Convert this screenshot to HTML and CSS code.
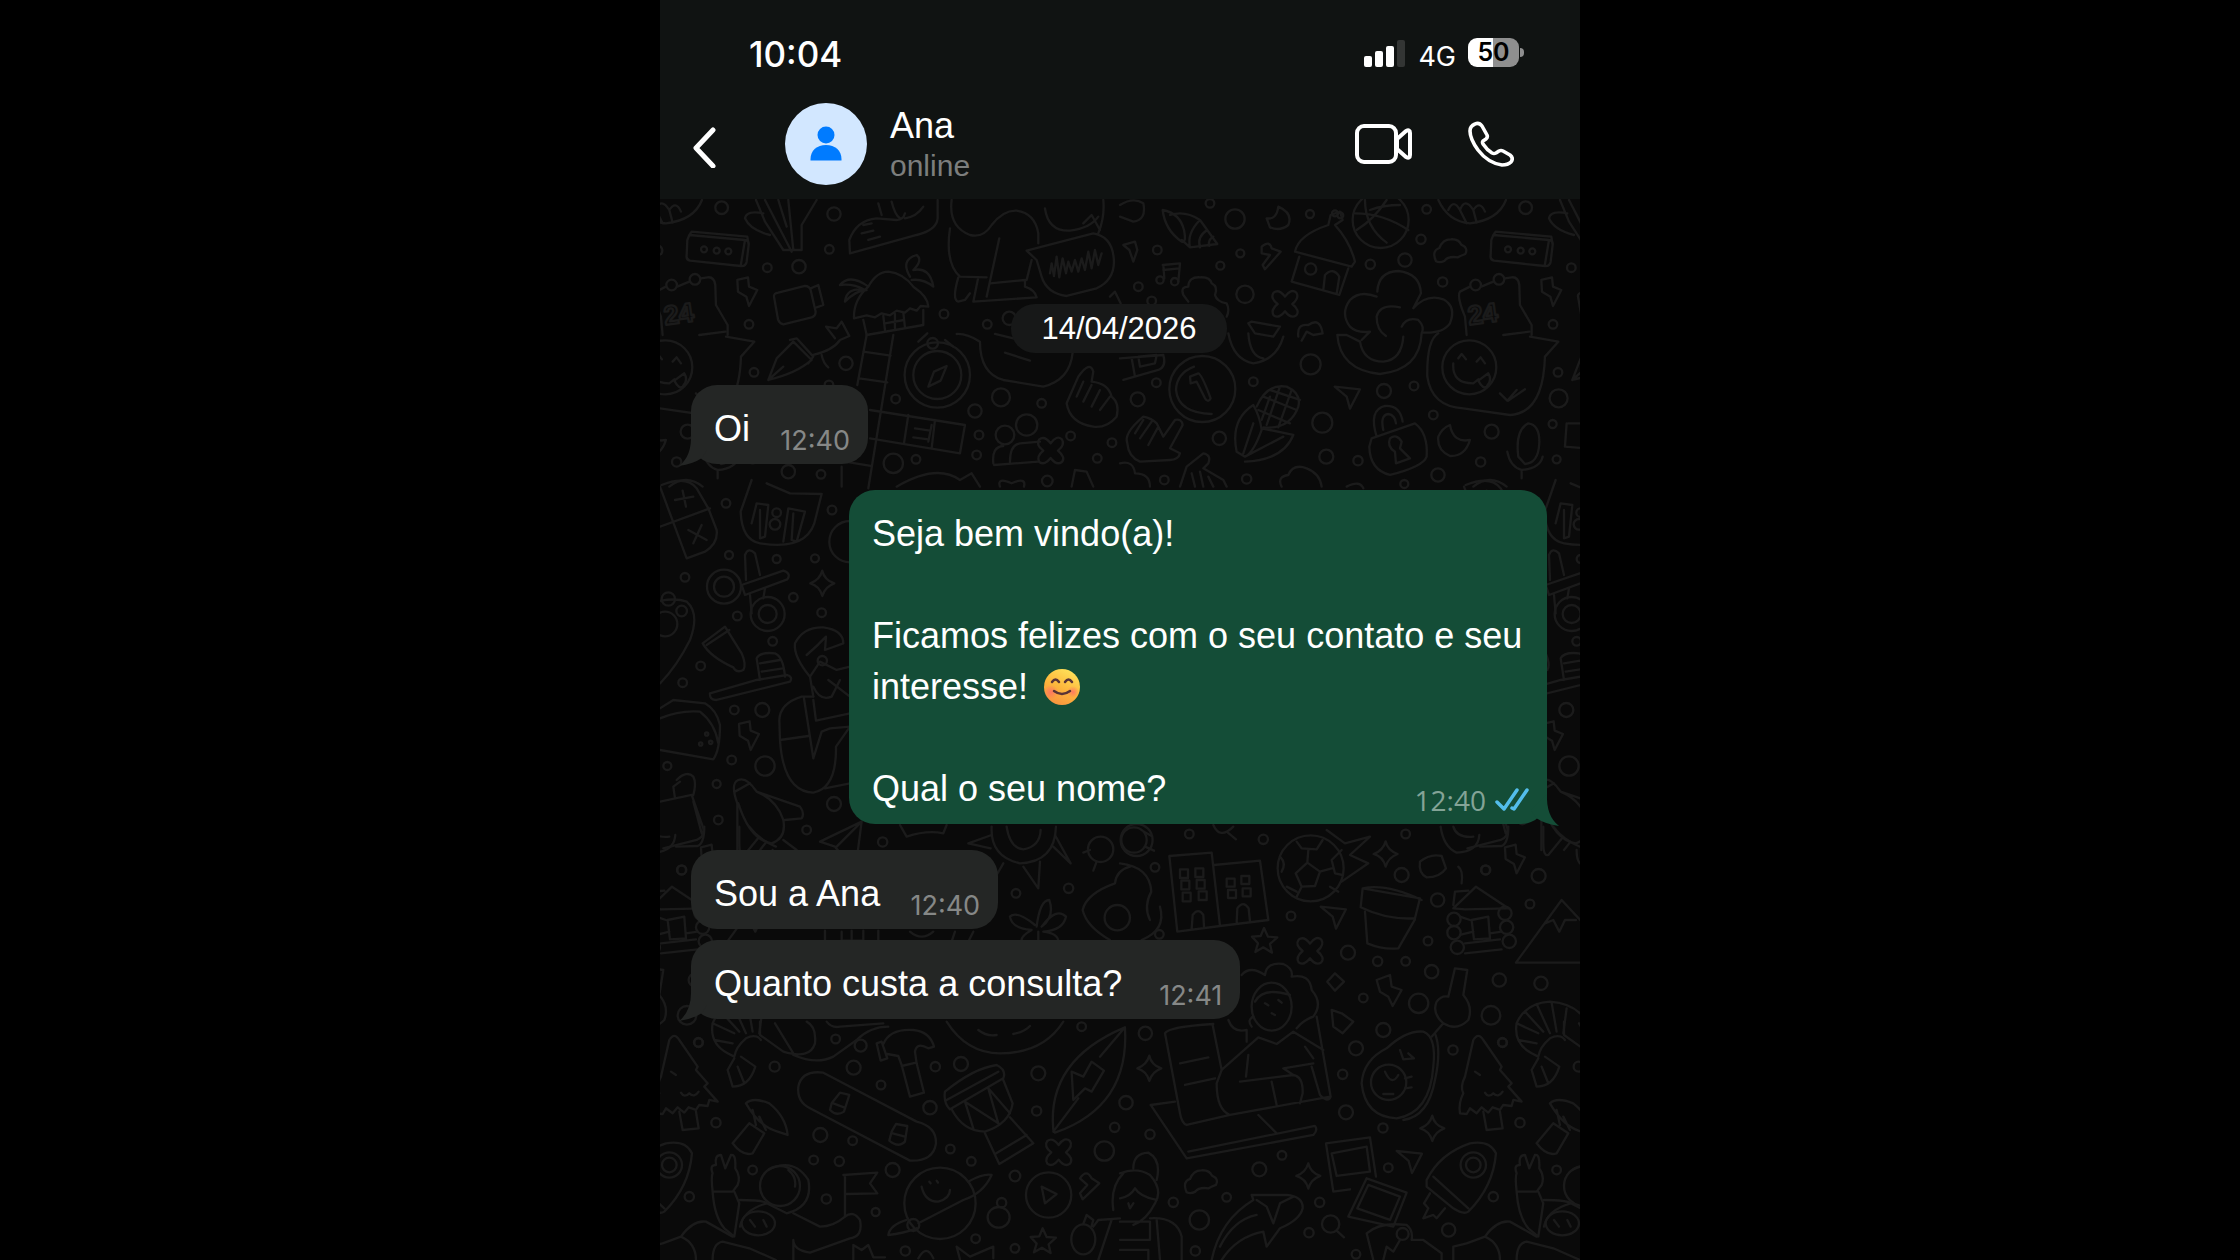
FILE: index.html
```html
<!DOCTYPE html>
<html lang="pt-BR">
<head>
    <meta charset="UTF-8">
    <meta name="viewport" content="width=device-width, initial-scale=1.0">
    <title>Ana</title>
    <link rel="stylesheet" href="styles.css">
</head>
<body>
    <div class="phone">
        <header class="header">
            <div class="status-bar">
                <span class="clock">10:04</span>
                <div class="status-icons">
                    <svg class="signal" width="42" height="27" viewBox="0 0 42 27" aria-hidden="true">
                        <rect x="0" y="16" width="8" height="11" rx="2" fill="#fff"/>
                        <rect x="11" y="11" width="8" height="16" rx="2" fill="#fff"/>
                        <rect x="22" y="6" width="8" height="21" rx="2" fill="#fff"/>
                        <rect x="33" y="0" width="8" height="27" rx="2" fill="#333534"/>
                    </svg>
                    <span class="network">4G</span>
                    <span class="battery">50</span>
                </div>
            </div>
            <div class="contact-bar">
                <button class="icon-button back" aria-label="Voltar">
                    <svg width="24" height="48" viewBox="0 0 24 48">
                        <path d="M20 10 3 28l17 18" fill="none" stroke="#fff" stroke-width="5" stroke-linecap="round" stroke-linejoin="round"/>
                    </svg>
                </button>
                <div class="avatar">
                    <svg width="32" height="36" viewBox="0 0 32 36" aria-hidden="true">
                        <circle cx="16" cy="9" r="8.5" fill="#007bff"/>
                        <path d="M.5 34.500V33C.5 24.500 7 19 16 19s15.500 5.500 15.500 14v1.500z" fill="#007bff"/>
                    </svg>
                </div>
                <div class="contact">
                    <h1 class="contact-name">Ana</h1>
                    <p class="contact-status">online</p>
                </div>
                <div class="actions">
                    <button class="icon-button" aria-label="Chamada de vídeo">
                        <svg width="58" height="40" viewBox="0 0 58 40" fill="none" stroke="#fff" stroke-width="4" stroke-linejoin="round">
                            <rect x="2" y="2" width="39" height="36" rx="7"/>
                            <path d="M42 15 51 7q4-2 4 2v22q0 4-4 2L42 25z"/>
                        </svg>
                    </button>
                    <button class="icon-button" aria-label="Ligar">
                        <svg width="46" height="46" viewBox="0 0 46 46" fill="none" stroke="#fff" stroke-width="3.600" stroke-linejoin="round">
                            <path d="M7 3q4-2 7 2l5 9q1 2-1 4l-3 2q-1 1 0 3 4 6 9 9 2 1 4 0l3-2q2-1 4 0l7 4q4 3 1 7-3 3-9 3Q20 42 10 29 2 18 2 10q0-5 5-7z"/>
                        </svg>
                    </button>
                </div>
            </div>
        </header>

        <main class="chat">
            <!-- wallpaper, repeats every 804px -->
            <svg class="wallpaper" width="920" height="1061" aria-hidden="true">
                <defs>
                    <path id="spark" d="M0-38Q6-10 36 0 8 10 0 38-8 8-36 0-8-10 0-38z"/>
                    <path id="bolt" d="M-30-38 2-46 5-18 30-8 5 40-3 12-28-3z"/>
                    <path id="plane" d="M-38-32 38-24 8 34-2-2z"/>
                    <path id="clover" d="M0-22Q18-48 34-34 44-18 22 0 46 20 34 34 18 46 0 22-18 46-34 34-44 18-22 0-46-18-34-34-18-46 0-22z"/>
                    <path id="cloud" d="M-42 32Q-56 0-32-8-22-34 2-34 26-36 34-18 56-8 46 10 30 16 24 20-6 16-16 30-30 38-42 32z"/>
                    <path id="star" d="M-2-38 10-12 38-10 16 10 22 36-4 20-28 34-20 8-38-12-12-14z"/>
                </defs>
                <g id="doodles">
                    <!-- top left -->
                    <g transform="translate(-10 -9) scale(.3333)">
                        <path d="M118 135 285 150Q298 152 296 165L290 215Q287 230 272 228L120 212Q108 210 110 195L112 150zM118 135 125 125 292 140 296 165M285 150 272 228"/>
                        <circle cx="162" cy="178" r="9"/><circle cx="200" cy="182" r="9"/><circle cx="235" cy="184" r="9"/>
                        <path d="M318 30 345 95 400 180 455 180V105L500 30M345 30 425 185M385 30 410 110M415 30 430 180M340 70Q290 60 285 85 300 120 360 135"/>
                        <path d="M600 190 598 150Q620 90 680 85L740 90Q760 90 765 70M600 190 800 135Q860 120 863 85V30M685 40 695 75M725 35Q735 75 750 85M820 50Q800 80 765 85M640 105 665 100M635 130 670 122M655 150 690 140"/>
                        <path d="M905 30Q895 110 960 135 1000 145 1025 105 1060 60 1100 62 1155 70 1165 130V160M900 115Q885 220 930 260L1010 262M1048 145 1010 320M925 262Q905 330 925 335L945 330 960 310M985 262 970 335 1160 322Q1155 300 1125 290V270L1020 280M1130 270 1145 210"/>
                        <path d="M1130 182 1330 130Q1390 140 1392 215 1392 270 1340 295L1250 318Q1190 310 1175 260L1160 210zM1200 250 1205 220 1212 258 1220 200 1228 262 1238 205 1248 250 1255 215 1265 245 1275 210 1285 245 1295 205 1305 240 1315 185 1325 235 1335 180 1345 225 1355 190"/>
                        <path d="M1185 55Q1195 125 1260 122 1320 115 1345 80M1360 30Q1365 80 1345 130M1300 100 1325 75 1350 120"/>
                        <use href="#bolt" x="292" y="308"/>
                        <path d="M372 320Q370 310 385 308L465 288Q478 288 482 300L497 365Q497 378 485 382L400 403Q388 400 384 388zM482 295 505 285 520 345 500 352"/>
                        <path d="M612 385Q610 330 655 290 680 245 715 245 760 250 790 290 835 320 835 350L812 348 800 362 780 355 765 368 740 362 720 376 695 370 675 382 650 376zM640 390 650 435 820 405V360M700 378 705 420M735 372V415M760 368 765 412M705 400 762 390M655 290Q600 250 570 285 610 280 645 300 590 290 585 335 620 300 650 300M780 260Q750 210 800 195 820 210 790 240 840 230 850 290 820 265 785 270"/>
                        <path d="M650 435 622 585M730 435 655 895M640 485 722 497M628 565 712 577M585 815 662 828M575 830V890M660 660 945 705 930 790 660 745M775 675 762 760M855 690 845 775M795 715 840 722M790 742 835 748M845 705 835 755"/>
                        <circle cx="862" cy="555" r="98"/><circle cx="862" cy="555" r="72"/><circle cx="848" cy="460" r="16"/>
                        <path d="M835 590 852 545 890 528 872 572zM805 455 832 430M885 450 910 470"/>
                        <path d="M355 570 380 505 430 455 485 510Q440 550 355 570M420 450 440 445 490 500 475 520M355 570 400 530M490 495Q550 480 570 450L598 438 575 395 560 415 528 410 555 445M515 495Q520 520 535 532"/>
                        <path d="M920 432Q950 430 990 455 990 550 1060 570L1180 590Q1260 570 1268 488M1065 488 1140 512M1035 432 1090 445"/>
                        <path d="M1250 640 1285 560Q1320 510 1330 545L1325 575Q1375 580 1385 620 1410 640 1400 680 1370 715 1330 710 1260 700 1250 640M1300 575 1280 620M1325 585 1300 635M1350 600 1325 650M1380 620 1350 660"/>
                        <path d="M1080 815Q1080 765 1110 760L1170 755M1030 820Q1025 770 1060 768M1032 825 1165 815"/>
                        <use href="#clover" x="1202" y="782"/>
                        <circle cx="1130" cy="705" r="32"/><circle cx="1065" cy="735" r="28"/>
                        <circle cx="552" cy="72" r="20"/><circle cx="538" cy="178" r="13"/><circle cx="352" cy="233" r="13"/><circle cx="447" cy="230" r="20"/><circle cx="297" cy="403" r="13"/><circle cx="588" cy="520" r="20"/><circle cx="312" cy="547" r="13"/><circle cx="882" cy="372" r="13"/><circle cx="1012" cy="403" r="13"/><circle cx="1078" cy="385" r="20"/><circle cx="737" cy="627" r="13"/><circle cx="975" cy="663" r="20"/><circle cx="1053" cy="622" r="27"/><circle cx="1175" cy="640" r="13"/><circle cx="987" cy="735" r="13"/><circle cx="980" cy="795" r="13"/><circle cx="1262" cy="738" r="13"/><circle cx="1386" cy="758" r="13"/><circle cx="1342" cy="805" r="13"/><circle cx="730" cy="820" r="29"/><circle cx="798" cy="808" r="13"/><circle cx="415" cy="845" r="20"/><circle cx="513" cy="853" r="13"/><circle cx="1192" cy="873" r="16"/><circle cx="537" cy="585" r="13"/>
                        <path d="M740 890Q860 820 930 870L965 850 990 890M1050 890Q1040 860 1085 880 1130 860 1122 890M1265 890 1275 840 1310 845 1330 890M1380 320 1395 305 1412 340"/>
                    </g>

                    <!-- top right -->
                    <g transform="translate(460 -9) scale(.3333)">
                        <path d="M0 45Q40 20 70 40 80 90 40 95L0 80"/>
                        <path d="M128 60Q180 70 192 120 200 160 185 155 135 120 128 60zM150 75Q195 60 240 90L292 162 210 172 185 150M240 90Q200 130 210 172M262 120Q230 140 240 172M280 140Q262 150 268 168"/>
                        <path d="M440 85Q470 90 475 50 520 70 505 105 480 125 450 112zM10 165 45 155 52 180 40 215 28 180zM425 170Q450 150 455 175L482 185 435 238 428 225 450 195 425 190z"/>
                        <path d="M525 185Q535 135 625 105L632 75 660 65 668 90 645 105Q690 155 705 215L695 230zM538 200 515 275 658 315 685 235M610 300 615 255Q640 230 658 260L650 312"/>
                        <circle cx="572" cy="237" r="17"/><circle cx="645" cy="70" r="9"/><circle cx="661" cy="76" r="9"/>
                        <circle cx="782" cy="90" r="84"/>
                        <path d="M705 70Q790 70 865 120M735 30Q735 110 800 158M710 120Q760 90 800 30M840 45Q790 45 750 60"/>
                        <path d="M955 30Q985 95 1050 100 1135 90 1158 30M985 60Q1000 25 1020 60 1035 20 1060 60 1080 30 1095 65M1020 60 1040 100M1060 60 1070 98"/>
                        <use href="#cloud" x="990" y="182"/>
                        <path d="M128 225 180 220 175 275M130 225 133 265M130 240 178 235"/><circle cx="120" cy="270" r="11"/><circle cx="164" cy="275" r="11"/>
                        <path d="M190 315Q180 290 205 290 205 260 240 262 270 260 275 280 295 290 285 315 290 335 320 340 330 360 320 380M190 315 205 335"/>
                        <use href="#clover" x="495" y="342"/>
                        <path d="M325 430Q340 510 400 520 470 510 490 440M395 395 480 410 460 440 405 430 385 400zM385 430Q390 500 430 505M535 440Q530 400 565 405 600 380 608 430L580 435 560 425 545 452"/>
                        <path d="M772 305Q775 245 835 243 900 250 903 310L880 355Q920 310 970 328 1010 350 990 400 970 430 910 428M770 320Q720 300 690 330 660 370 690 410 710 430 750 425L725 450M840 352Q780 340 770 380 770 420 798 438M845 410Q860 380 895 390 915 410 905 430 900 540 780 552 660 540 652 435L680 435 720 455Q730 515 790 515 845 510 850 440"/>
                        <path d="M1040 435 1035 380Q1010 320 1020 305L1050 290M1084 290 1120 275M1155 265 1175 262Q1195 260 1198 285L1200 345 1235 405V435M1150 435 1228 425"/>
                        <circle cx="1067" cy="285" r="16"/><circle cx="1137" cy="268" r="16"/>
                        <text class="doodle-number" x="1048" y="405" transform="rotate(-8 1048 405)">24</text>
                        <circle cx="1048" cy="532" r="81"/>
                        <path d="M955 430Q920 450 922 560 935 650 1030 655L1170 675Q1270 670 1275 500L1315 455 1230 440M1000 520Q995 580 1060 580L1075 568M1015 505 1025 492 1038 508M1070 515 1082 502 1095 520M1075 572 1105 550Q1118 570 1100 590 1090 600 1075 572M1140 610 1162 632 1190 600M1165 632 1215 598"/>
                        <path d="M0 505 130 495Q140 530 115 540L10 570M35 505 45 560M55 500 110 495 105 520 60 530z"/>
                        <circle cx="247" cy="597" r="99"/>
                        <path d="M222 530Q170 550 168 600 175 670 275 672M210 560 235 550Q245 552 272 625 265 640 255 625L230 575 212 580z"/>
                        <path d="M350 785Q330 690 400 645 420 680 425 720 400 790 375 800zM370 790 400 700M425 715 520 735Q490 810 375 815M375 800 490 740"/>
                        <path d="M410 650Q440 580 500 590 545 610 535 650 510 720 430 712M430 620 530 660M415 660 510 700M450 600 540 630M480 590 440 705M515 600 475 712M450 620 425 690"/>
                        <use href="#plane" x="682" y="622"/>
                        <path d="M770 740Q745 660 795 648 840 645 848 695M790 720Q780 675 805 672 825 675 828 700M755 745 885 700Q925 730 920 800 910 830 810 855 750 840 748 770zM825 785Q800 770 810 745 830 730 845 755L840 775 870 805 828 820z"/>
                        <path d="M990 705Q1000 760 1050 750 1035 800 990 798 950 780 955 740 965 715 990 705zM1195 800Q1185 720 1225 700 1260 705 1258 760 1255 820 1215 822M1195 800 1215 822M1162 785Q1170 830 1205 840 1260 835 1268 800M1205 840V865"/>
                        <path d="M22 760Q10 730 70 680 95 685 110 700L130 740 165 690Q185 685 188 705L150 775 180 790Q175 810 150 810L60 815Q25 800 22 760M70 690 45 730M95 695 60 745M115 710 85 765"/>
                        <path d="M180 890 200 830 250 790Q275 795 265 820L250 835 310 870 320 890M215 850 225 890M240 845 250 890M265 860 280 890M0 820Q40 810 45 850 90 850 90 890M485 890Q470 860 505 855 520 820 560 835 600 850 605 890M680 890Q720 870 730 895M1060 890Q1110 850 1160 890M1345 700H1400M1340 700 1335 770 1400 775"/>
                        <circle cx="345" cy="87" r="29"/><circle cx="270" cy="40" r="13"/><circle cx="570" cy="72" r="12"/><circle cx="112" cy="180" r="13"/><circle cx="361" cy="190" r="12"/><circle cx="301" cy="227" r="12"/><circle cx="375" cy="313" r="26"/><circle cx="55" cy="290" r="13"/><circle cx="95" cy="333" r="13"/><circle cx="751" cy="223" r="14"/><circle cx="855" cy="210" r="20"/><circle cx="903" cy="148" r="14"/><circle cx="920" cy="58" r="13"/><circle cx="968" cy="276" r="14"/><circle cx="1217" cy="53" r="19"/><circle cx="572" cy="523" r="30"/><circle cx="400" cy="575" r="13"/><circle cx="109" cy="578" r="13"/><circle cx="53" cy="628" r="21"/><circle cx="298" cy="745" r="20"/><circle cx="607" cy="698" r="30"/><circle cx="792" cy="603" r="21"/><circle cx="882" cy="588" r="13"/><circle cx="940" cy="675" r="13"/><circle cx="1115" cy="725" r="21"/><circle cx="1082" cy="816" r="14"/><circle cx="954" cy="855" r="20"/><circle cx="853" cy="882" r="12"/><circle cx="714" cy="812" r="14"/><circle cx="619" cy="800" r="21"/><circle cx="380" cy="867" r="14"/><circle cx="133" cy="870" r="13"/><circle cx="1316" cy="625" r="27"/><circle cx="1298" cy="702" r="12"/><circle cx="1310" cy="808" r="12"/>
                    </g>

                    <!-- left strip beside the outgoing message -->
                    <g transform="translate(-10 281) scale(.3333)">
                        <path d="M35 15Q110-15 140 25L175 85 200 150Q205 190 165 215L110 235 30 20M30 140 180 85M75 60 130 50M98 32 108 80M115 150 170 180M155 135 130 190"/>
                        <path d="M305 0 272 95Q275 180 330 190 480 215 498 110L515 42 420 40 350 10M305 130 320 70 355 75 345 170 330 175 330 90M400 185 415 85 465 95 440 185 425 180 430 100"/>
                        <circle cx="380" cy="98" r="13"/><circle cx="375" cy="133" r="16"/>
                        <circle cx="222" cy="320" r="51"/><circle cx="222" cy="320" r="30"/><circle cx="353" cy="402" r="51"/><circle cx="353" cy="402" r="27"/>
                        <path d="M288 300 285 225Q295 200 315 220L330 285M275 315 400 272Q425 280 412 298L285 345zM300 345 305 400M345 325 340 355"/>
                        <use href="#spark" x="517" y="310"/>
                        <path d="M158 490 225 440 275 520Q290 555 280 570 260 580 250 562 180 530 158 490M170 495 238 450"/>
                        <path d="M180 640 320 600 410 585Q430 590 420 605L200 660Q178 660 180 640M330 600 320 535Q330 515 375 520 400 530 405 590M330 550 390 540M335 575 398 565"/>
                        <path d="M0 370Q70 350 110 365 150 400 120 480 80 560 30 610"/><circle cx="45" cy="432" r="37"/><circle cx="95" cy="393" r="16"/><circle cx="55" cy="357" r="20"/>
                        <path d="M490 650 480 590Q430 530 435 490 460 440 520 442 580 450 580 490L525 510 528 470Q500 500 470 525M480 590 510 545 560 570 600 560M490 620Q510 665 545 650L570 600"/><circle cx="517" cy="542" r="14"/>
                        <path d="M490 650 455 650Q390 670 388 720L390 780 475 768M390 780Q400 935 490 938 560 925 558 800L600 740 540 745 515 755 490 835 462 655M490 660 498 722 600 700M525 925 600 910M535 600 600 650"/>
                        <path d="M30 685 70 660 165 670Q200 690 210 735 210 810 190 838L30 810M30 715Q90 690 150 695 195 730 205 790"/>
                        <circle cx="170" cy="762" r="5"/><circle cx="152" cy="792" r="5"/><circle cx="182" cy="787" r="5"/>
                        <use href="#bolt" x="297" y="770"/>
                        <path d="M30 965 125 945 160 1045Q165 1070 140 1080L40 1105M75 955 70 920 90 905M80 900Q110 870 130 890 140 910 130 945M130 965 155 1060"/>
                        <path d="M262 1110V970Q240 910 265 900 290 890 320 935L450 980Q465 1000 455 1015L405 1020M265 970Q300 1080 365 1090 410 1075 400 1020 380 960 320 935M255 935 300 910M350 1085 330 1110M400 1080 440 1110"/>
                        <path d="M510 1085 635 1025 620 1140M510 1085 555 1100 580 1130M635 1025 560 1100"/>
                        <circle cx="228" cy="70" r="13"/><circle cx="546" cy="90" r="13"/><circle cx="237" cy="225" r="12"/><circle cx="380" cy="237" r="12"/><circle cx="495" cy="235" r="12"/><circle cx="105" cy="292" r="13"/><circle cx="430" cy="352" r="13"/><circle cx="515" cy="398" r="13"/><circle cx="262" cy="408" r="13"/><circle cx="368" cy="484" r="13"/><circle cx="152" cy="558" r="13"/><circle cx="98" cy="608" r="13"/><circle cx="253" cy="690" r="13"/><circle cx="337" cy="690" r="21"/><circle cx="245" cy="840" r="13"/><circle cx="345" cy="858" r="29"/><circle cx="52" cy="858" r="12"/><circle cx="200" cy="912" r="12"/><circle cx="552" cy="972" r="21"/><circle cx="205" cy="1020" r="13"/><circle cx="470" cy="1050" r="13"/><circle cx="698" cy="1086" r="14"/><circle cx="600" cy="185" r="62"/>
                        <path d="M750 1035 770 1070Q830 1050 880 1060L890 1035"/>
                    </g>

                    <!-- around the short messages -->
                    <g transform="translate(-10 621) scale(.3333)">
                        <path d="M1025 20Q1020 110 1110 130 1215 125 1218 20M1070 20Q1080 85 1120 88 1170 80 1172 30M1025 45 955 70 1022 85M1060 130 1040 165M1120 140 1165 205 1170 125M1210 80 1262 130 1215 45"/>
                        <circle cx="1352" cy="88" r="38"/><circle cx="1460" cy="60" r="48"/><path d="M1320 90 1300 98M1340 125 1330 152"/>
                        <path d="M1160 320Q1170 240 1198 240 1215 290 1175 320 1220 260 1248 290 1240 330 1180 335 1225 340 1225 365M1155 315Q1100 270 1080 290 1085 325 1145 330 1110 350 1115 365M1165 335V365"/>
                        <path d="M1440 140Q1400 150 1395 190 1310 220 1298 270 1310 320 1380 360M1530 260Q1550 330 1475 360M1410 130Q1500 140 1504 215 1480 260 1500 300"/><circle cx="1402" cy="293" r="38"/>
                        <circle cx="1098" cy="220" r="13"/><circle cx="1256" cy="205" r="14"/><circle cx="1295" cy="620" r="13"/><circle cx="95" cy="150" r="13"/>
                        <path d="M525 332V365M575 335V362H640V332M605 332V362M685 332V365M780 335Q815 365 850 335M905 365 915 335M955 365 970 335"/>
                    </g>

                    <!-- lower right -->
                    <g transform="translate(460 621) scale(.3333)">
                        <circle cx="42" cy="60" r="38"/><path d="M72 35 95 48M75 80 102 92M280 15Q300 60 340 20M320 35 348 58"/>
                        <path d="M148 108 275 98 300 318 172 335zM282 135 420 122 445 300 300 318M215 325 218 285Q235 262 250 285L252 320M350 308 352 265Q370 240 386 265L390 304"/>
                        <path d="M180 148h24v26h-24zM184 182h24v26h-24zM188 218h24v26h-24zM226 145h24v26h-24zM230 180h24v26h-24zM236 214h24v26h-24zM320 176h24v24h-24zM324 210h24v24h-24zM364 168h24v24h-24zM368 205h24v24h-24z"/>
                        <circle cx="572" cy="145" r="99"/>
                        <path d="M562 128 600 155 585 198 545 200 527 160zM530 65 545 85 590 88 608 60M480 110Q500 130 485 155M665 90 635 120 645 160 668 165M500 200 530 215M630 200 655 215M562 128 565 90M600 155 635 145M545 200 530 230M620 30 675 70 750 50 690 105 745 130 665 185"/>
                        <use href="#spark" x="797" y="102"/>
                        <path d="M900 125Q930 100 965 108L978 145Q960 172 920 172 895 160 900 125M962 20Q970 80 1010 98 1075 95 1078 45M1000 20Q1010 55 1060 50M1080 80 1145 78Q1165 70 1165 20"/>
                        <use href="#bolt" x="1185" y="120"/>
                        <path d="M728 205 900 235 885 295Q800 300 722 262zM728 205Q800 190 905 240M735 275 742 370Q790 390 835 385L885 298"/>
                        <use href="#plane" x="640" y="292"/>
                        <path d="M1000 265 1068 200 1165 265 1035 268zM1000 255 1005 215 1045 212M1015 140Q1030 150 1025 190M1055 300 1105 290 1110 355 1062 358zM1020 290 1050 300M1020 345 1060 335M1035 400 1145 388M1110 340 1145 335M1035 370 1140 358"/>
                        <circle cx="1002" cy="298" r="20"/><circle cx="1002" cy="338" r="20"/><circle cx="1012" cy="382" r="20"/><circle cx="1155" cy="280" r="20"/><circle cx="1160" cy="322" r="20"/><circle cx="1168" cy="364" r="20"/>
                        <path d="M1188 428 1325 240 1390 310M1188 428H1390M1275 310 1300 300 1318 335 1335 300 1368 300M1270 20V70Q1270 110 1285 105L1330 50M1300 20Q1330 60 1380 80M1370 90Q1370 120 1380 130"/>
                        <use href="#star" x="434" y="362"/><use href="#clover" x="570" y="393"/>
                        <!-- reading in an armchair -->
                        <path d="M365 465Q390 435 435 465 440 425 490 432 520 445 515 470 570 460 575 510 610 550 580 590 550 600 530 625"/>
                        <ellipse cx="455" cy="560" rx="60" ry="72"/>
                        <path d="M405 545Q430 500 510 525M435 550 445 556M475 540 485 548M455 580 465 585M400 590Q380 600 395 620M325 600Q340 640 380 630V665M590 590 632 830Q625 850 600 825L575 740M305 750 415 652 470 672 520 635 610 690M278 615 305 750 290 790Q290 870 330 885L200 915Q185 910 180 880L135 640Q145 620 280 612M180 730 265 712M195 795 285 775M330 885 630 830M385 705 378 770M360 785 520 765 490 745 580 730M455 785 470 855M520 765Q550 770 548 820L540 850M92 855 165 845M92 855 200 1015 580 945Q595 930 585 918L205 995M415 885 470 940M555 680 580 715"/>
                        <path d="M645 460 672 485 645 512 622 485zM635 570 665 580 700 605 668 640 640 620zM770 480 810 465 815 500 845 510 818 558 805 530 780 515z"/>
                        <path d="M985 530 1005 445 1042 450 1030 525Q1060 560 1045 600 1010 635 970 610 935 580 950 545 965 525 985 530M970 610 935 650"/>
                        <path d="M725 790Q730 720 800 685 860 630 910 635 950 650 940 740 930 880 830 895 735 890 725 790M945 640Q965 690 945 780 925 890 850 900M840 690 850 718 882 715 865 700M855 775 875 770M855 805 875 802"/>
                        <circle cx="806" cy="787" r="53"/><path d="M795 755Q815 800 835 765M790 822H820"/>
                        <path d="M1020 880Q1015 850 1030 820 1020 800 1035 770L1060 660Q1075 635 1090 660L1145 740 1140 750 1175 790 1165 800 1205 845 1180 840 1175 858 1150 855 1140 870 1118 862 1105 878 1085 862 1070 880 1050 865 1040 882zM1090 875 1100 930 1148 925 1140 875M1065 755 1080 765M1095 818Q1105 835 1120 820 1135 835 1148 815"/>
                        <path d="M1235 700Q1180 670 1190 610 1215 550 1290 545 1350 550 1380 580M1235 700 1255 710M1255 710Q1260 680 1290 655 1320 640 1335 660M1190 610 1255 640M1215 575 1270 635M1250 552 1290 640M1295 548 1310 635M1340 565 1330 640M1195 660 1250 670M1255 715 1235 750 1250 800Q1300 800 1318 740L1275 710M1265 740 1285 790"/>
                        <path d="M1250 970 1300 910 1345 940 1310 1000Q1280 1010 1250 970M1290 850Q1310 830 1360 850 1410 890 1415 945L1385 935Q1330 920 1290 850M1310 870 1320 915M1330 890 1350 930"/>
                        <path d="M618 970 750 952 768 1070M618 970 640 1115 690 1108M635 1000 740 980 750 1055 650 1068zM740 1075 860 1118 820 1220 685 1190zM745 1095 840 1130 810 1200 712 1165z"/>
                        <use href="#plane" x="868" y="1025"/><use href="#spark" x="937" y="925"/><use href="#spark" x="565" y="1068"/><use href="#spark" x="88" y="745"/>
                        <path d="M920 1080Q960 1000 1050 970 1110 960 1128 1000 1120 1100 1045 1175 1030 1185 1000 1165L920 1100zM940 1070 1045 1165M930 1120 912 1150 925 1165 910 1195 940 1185 950 1195 975 1165"/><circle cx="1060" cy="1035" r="38"/><circle cx="1060" cy="1035" r="22"/>
                        <path d="M1190 1115Q1185 1070 1190 1060 1180 1035 1200 1035 1195 1005 1215 1005L1228 1045 1245 1005Q1260 1000 1258 1045 1275 1070 1265 1095L1250 1115zM1190 1115Q1195 1190 1225 1225L1255 1250 1270 1150 1255 1115"/>
                        <use href="#cloud" x="242" y="1085"/>
                        <path d="M0 1135Q30 1130 45 1105 60 1130 110 1140M0 1060Q50 1040 90 1065 130 1110 105 1150 80 1200 40 1215M40 1045Q40 1000 85 998 125 1020 110 1080M0 1205H90V1260H0M90 1195Q170 1190 185 1250V1320M110 1200 120 1320M0 1290H85V1320M25 1150 30 1165 40 1150"/>
                        <path d="M275 1320Q300 1200 400 1140L395 1125 500 1125Q550 1130 548 1165 540 1200 480 1225L440 1280 430 1235Q350 1250 305 1320M410 1140 440 1160 460 1210 480 1150 520 1130M300 1280Q340 1200 410 1185"/>
                        <circle cx="632" cy="1212" r="26"/><path d="M650 1232 672 1252M740 1240Q780 1205 860 1215 880 1230 875 1260L910 1260 965 1300V1320M740 1240 760 1320M790 1320 800 1280 820 1295 840 1260M1000 1280 1040 1270 1095 1250Q1130 1200 1170 1205L1250 1250M1000 1280V1320M1095 1250Q1140 1270 1140 1320M1190 1320Q1190 1270 1220 1265L1300 1285 1380 1320"/>
                        <circle cx="848" cy="1242" r="18"/>
                        <circle cx="208" cy="42" r="13"/><circle cx="430" cy="58" r="14"/><circle cx="105" cy="142" r="13"/><circle cx="118" cy="343" r="13"/><circle cx="513" cy="288" r="13"/><circle cx="845" cy="165" r="21"/><circle cx="857" cy="42" r="13"/><circle cx="953" cy="240" r="20"/><circle cx="1097" cy="150" r="14"/><circle cx="1256" cy="168" r="21"/><circle cx="1230" cy="252" r="13"/><circle cx="684" cy="398" r="21"/><circle cx="924" cy="363" r="13"/><circle cx="773" cy="424" r="14"/><circle cx="857" cy="424" r="13"/><circle cx="935" cy="455" r="20"/><circle cx="1138" cy="480" r="20"/><circle cx="1263" cy="490" r="20"/><circle cx="730" cy="534" r="13"/><circle cx="896" cy="550" r="29"/><circle cx="1113" cy="586" r="28"/><circle cx="790" cy="630" r="21"/><circle cx="708" cy="685" r="21"/><circle cx="668" cy="763" r="14"/><circle cx="999" cy="690" r="14"/><circle cx="1147" cy="667" r="13"/><circle cx="678" cy="877" r="21"/><circle cx="789" cy="924" r="14"/><circle cx="1200" cy="908" r="14"/><circle cx="76" cy="640" r="20"/><circle cx="18" cy="848" r="20"/><circle cx="90" cy="943" r="14"/><circle cx="486" cy="1006" r="13"/><circle cx="418" cy="1048" r="21"/><circle cx="805" cy="1043" r="13"/><circle cx="1120" cy="1130" r="14"/><circle cx="599" cy="1147" r="14"/><circle cx="320" cy="1132" r="13"/><circle cx="160" cy="1147" r="14"/><circle cx="238" cy="1200" r="29"/><circle cx="567" cy="1238" r="14"/><circle cx="986" cy="1230" r="20"/><circle cx="1310" cy="1050" r="13"/><circle cx="226" cy="1293" r="14"/><circle cx="708" cy="1303" r="13"/>
                    </g>

                    <!-- lower left -->
                    <g transform="translate(-10 821) scale(.3333)">
                        <path d="M330 5V45L400 95Q480 120 495 70 500 20 470 5M375 10 430 100M430 105Q500 135 550 110L620 60Q660 20 715 20M530 5Q545 25 570 20L700 10"/>
                        <path d="M445 200Q455 150 520 158L800 305Q860 320 858 370 850 425 780 422L480 265Q440 245 445 200M570 218 598 225 582 275Q560 290 540 270L545 250zM738 312 772 318 765 365Q745 385 718 362L725 335zM550 250 582 262M728 340 765 350"/>
                        <path d="M680 70 695 65 712 115 692 122zM700 72Q720 25 790 30 840 35 852 80L835 85Q800 65 795 95L800 130 822 218 780 230 755 135 745 108 712 102M755 138 798 128"/>
                        <path d="M890 5Q950 100 1050 100 1180 100 1240 5M985 30Q1010 50 1040 45M1090 42Q1125 35 1140 18"/>
                        <path d="M885 215Q970 145 1040 135 1070 150 1060 175L900 268Q880 250 885 215M890 240 1045 155M905 268Q940 335 1005 335 1080 310 1088 250L1060 180M945 245 970 325M945 245 1045 310 1015 205M1015 205 1080 280M1005 340 1048 432 1150 370 1080 292M1035 402 1130 345"/>
                        <path d="M1210 330Q1190 120 1425 22 1440 260 1215 338zM1210 335 1285 235M1270 240 1265 155 1300 170 1325 125 1362 152 1325 215 1305 205zM1350 110 1425 22"/>
                        <use href="#clover" x="1226" y="397"/>
                        <circle cx="390" cy="498" r="60"/><path d="M355 450Q430 410 475 480 490 560 410 580L350 550M415 450Q440 470 435 500M270 540Q340 540 350 550 280 570 270 620"/>
                        <ellipse cx="325" cy="610" rx="50" ry="36"/>
                        <path d="M300 600 315 620M340 600 350 620M430 580 510 620Q550 620 585 590 610 570 630 600 640 650 600 655L480 698Q430 690 430 660V720M585 590V465M580 465 682 458 660 490 682 520 590 522"/>
                        <circle cx="870" cy="550" r="107"/>
                        <path d="M955 485Q1000 460 1025 465 1000 520 940 540L805 610M770 600Q720 615 715 645 760 640 800 625M815 500Q825 545 865 545 900 535 900 510M838 485 842 490M860 482 864 488"/><circle cx="790" cy="615" r="18"/>
                        <circle cx="1196" cy="525" r="68"/><path d="M1175 500 1220 522 1185 550zM1290 475Q1310 445 1325 475L1348 490 1298 538 1290 520 1312 495z"/>
                        <ellipse cx="1046" cy="592" rx="33" ry="31"/><circle cx="1055" cy="548" r="14"/>
                        <use href="#star" x="1180" y="663"/>
                        <ellipse cx="1300" cy="658" rx="36" ry="45"/><path d="M1300 612 1310 585 1330 600 1325 618M1330 620 1345 600 1410 595M1345 720 1385 600M1390 570Q1380 500 1420 460"/>
                        <path d="M610 718V675L635 690 655 675 670 712H705M920 680 930 718M920 680 960 710 1030 680V715M805 715Q830 670 850 715"/>
                        <circle cx="146" cy="68" r="13"/><circle cx="374" cy="140" r="15"/><circle cx="557" cy="57" r="13"/><circle cx="632" cy="77" r="18"/><circle cx="611" cy="143" r="21"/><circle cx="693" cy="195" r="13"/><circle cx="856" cy="140" r="14"/><circle cx="933" cy="132" r="21"/><circle cx="1165" cy="160" r="21"/><circle cx="840" cy="263" r="20"/><circle cx="1160" cy="273" r="14"/><circle cx="511" cy="345" r="21"/><circle cx="608" cy="362" r="13"/><circle cx="491" cy="420" r="13"/><circle cx="568" cy="424" r="14"/><circle cx="728" cy="450" r="21"/><circle cx="901" cy="387" r="13"/><circle cx="964" cy="424" r="13"/><circle cx="1095" cy="468" r="16"/><circle cx="1363" cy="393" r="29"/><circle cx="1394" cy="322" r="14"/><circle cx="529" cy="537" r="14"/><circle cx="677" cy="576" r="12"/><circle cx="977" cy="656" r="13"/><circle cx="1095" cy="685" r="13"/><circle cx="766" cy="693" r="14"/>
                    </g>
                </g>
                <use href="#doodles" x="804"/>
                <use href="#doodles" x="-804"/>
            </svg>

            <time class="date" datetime="2026-04-14">14/04/2026</time>

            <div class="message received tail">
                <p class="text">Oi</p>
                <time class="time">12:40</time>
                <svg class="tail-shape" width="28" height="36" viewBox="0 0 28 36" aria-hidden="true"><path d="M12 2Q13 24 0 34 14 32 23 26L28 18z"/></svg>
            </div>

            <div class="message sent tail">
                <p class="text">Seja bem vindo(a)!

Ficamos felizes com o seu contato e seu interesse! <svg class="emoji" width="36" height="36" viewBox="0 0 36 36" role="img" aria-label="😊">
                    <defs>
                        <linearGradient id="face" x1=".8" y1="0" x2=".3" y2="1">
                            <stop offset="0" stop-color="#ffe55c"/>
                            <stop offset=".55" stop-color="#fdb63c"/>
                            <stop offset="1" stop-color="#f8923f"/>
                        </linearGradient>
                        <radialGradient id="blush">
                            <stop offset="0" stop-color="#ff6a6a" stop-opacity=".8"/>
                            <stop offset="1" stop-color="#ff6a6a" stop-opacity="0"/>
                        </radialGradient>
                    </defs>
                    <circle cx="18" cy="18" r="18" fill="url(#face)"/>
                    <circle cx="7" cy="23" r="7" fill="url(#blush)"/>
                    <circle cx="29" cy="23" r="6" fill="url(#blush)"/>
                    <path d="M8 13q3.500-5 7 0M21 13q3.500-5 7 0M10 22q8 6 16 0" fill="none" stroke="#5a3436" stroke-width="2.500" stroke-linecap="round"/>
                </svg>

Qual o seu nome?</p>
                <time class="time">12:40</time>
                <svg class="checks" width="34" height="26" viewBox="0 0 34 26" role="img" aria-label="Lida">
                    <path d="M2 14l7 7L22 2M17 20l2 1L32 2" fill="none" stroke="#53bdeb" stroke-width="3.500" stroke-linecap="round" stroke-linejoin="round"/>
                </svg>
                <svg class="tail-shape" width="28" height="36" viewBox="0 0 28 36" aria-hidden="true"><path d="M16 2Q15 24 28 34 14 32 5 26L0 18z"/></svg>
            </div>

            <div class="message received">
                <p class="text">Sou a Ana</p>
                <time class="time">12:40</time>
            </div>

            <div class="message received tail">
                <p class="text">Quanto custa a consulta?</p>
                <time class="time">12:41</time>
                <svg class="tail-shape" width="28" height="36" viewBox="0 0 28 36" aria-hidden="true"><path d="M12 2Q13 24 0 34 14 32 23 26L28 18z"/></svg>
            </div>
        </main>
    </div>
</body>
</html>
```

FILE: styles.css
```css
* {
    box-sizing: border-box;
}
body {
    margin: 0;
    background-color: #000;
    color: #fff;
    font-family: "Liberation Sans", Arial, sans-serif;
}
h1, p {
    margin: 0;
    font-weight: normal;
}
.phone {
    display: flex;
    flex-direction: column;
    max-width: 920px;
    min-height: 100vh;
    margin: 0 auto;
}

/* header */
.header {
    padding: 33px 66px 14px 33px;
    background-color: #101312;
}
.status-bar {
    display: flex;
    justify-content: space-between;
    padding-left: 56px;
    margin-right: -10px;
    font-family: Inter, sans-serif;
}
.clock {
    font-size: 35px;
    line-height: 42px;
    font-weight: 500;
}
.status-icons {
    display: flex;
    align-items: flex-end;
    padding-bottom: 8px;
}
.network {
    margin: 0 12px;
    font-size: 27px;
    line-height: 20px;
}
.battery {
    position: relative;
    width: 51px;
    margin-right: 5px;
    border-radius: 9px;
    background: linear-gradient(to right, #fff 50%, #8f8f8f 50%);
    color: #000;
    font-size: 25px;
    line-height: 29px;
    font-weight: 600;
    text-align: center;
}
.battery::after {
    content: "";
    position: absolute;
    top: 10px;
    right: -5px;
    width: 4px;
    height: 9px;
    border-radius: 0 4px 4px 0;
    background-color: #8f8f8f;
}
.contact-bar {
    display: flex;
    align-items: center;
    margin-top: 28px;
}
.icon-button {
    padding: 0;
    border: none;
    background: none;
    cursor: pointer;
}
.icon-button svg {
    display: block;
}
.avatar {
    display: flex;
    align-items: center;
    justify-content: center;
    width: 82px;
    height: 82px;
    margin: 0 23px 0 68px;
    border-radius: 50%;
    background-color: #d2e7ff;
}
.contact {
    padding-top: 3px;
}
.contact-name {
    font-size: 36px;
    line-height: 40px;
}
.contact-status {
    color: #7c7e7d;
    font-size: 30px;
    line-height: 39px;
}
.actions {
    display: flex;
    align-items: center;
    gap: 55px;
    margin-left: auto;
}

/* conversation */
.chat {
    position: relative;
    flex: 1;
    display: flex;
    flex-direction: column;
    align-items: flex-start;
    padding: 105px 33px 60px 31px;
    background-color: #0a0a0a;
    overflow: hidden;
}
.wallpaper {
    position: absolute;
    top: 0;
    left: 0;
    fill: none;
    stroke: #1b1b1b;
    stroke-width: 7;
    stroke-linecap: round;
    stroke-linejoin: round;
}
.doodle-number {
    font-size: 80px;
    font-weight: bold;
}
.date {
    position: relative;
    align-self: center;
    padding: 0 30px;
    margin-bottom: 32px;
    border-radius: 24px;
    background-color: #171818;
    font-size: 31px;
    line-height: 49px;
}
.message {
    position: relative;
    display: flex;
    align-items: flex-end;
    padding: 18px 18px 10px 23px;
    margin-bottom: 11px;
    border-radius: 26px;
}
.received {
    background-color: #242625;
    fill: #242625;
}
.sent {
    align-self: flex-end;
    max-width: 698px;
    margin: 15px 0 26px;
    background-color: #144d37;
    fill: #144d37;
}
.text {
    flex: 1;
    font-size: 36px;
    line-height: 51px;
    white-space: pre-wrap;
}
.time {
    min-width: 71px;
    color: #868887;
    font-family: Inter, sans-serif;
    font-size: 27px;
    line-height: 27px;
    text-align: right;
}
.received .time {
    margin-left: 29px;
}
.sent .text {
    margin-right: -113px;
}
.sent .time {
    margin-right: 9px;
    color: #84a497;
    font-family: "Open Sans", sans-serif;
    font-size: 28px;
}
.emoji {
    margin-left: 6px;
    vertical-align: -6px;
}
.tail-shape {
    position: absolute;
    bottom: -4px;
}
.received .tail-shape {
    left: -12px;
}
.sent .tail-shape {
    right: -12px;
}
```
